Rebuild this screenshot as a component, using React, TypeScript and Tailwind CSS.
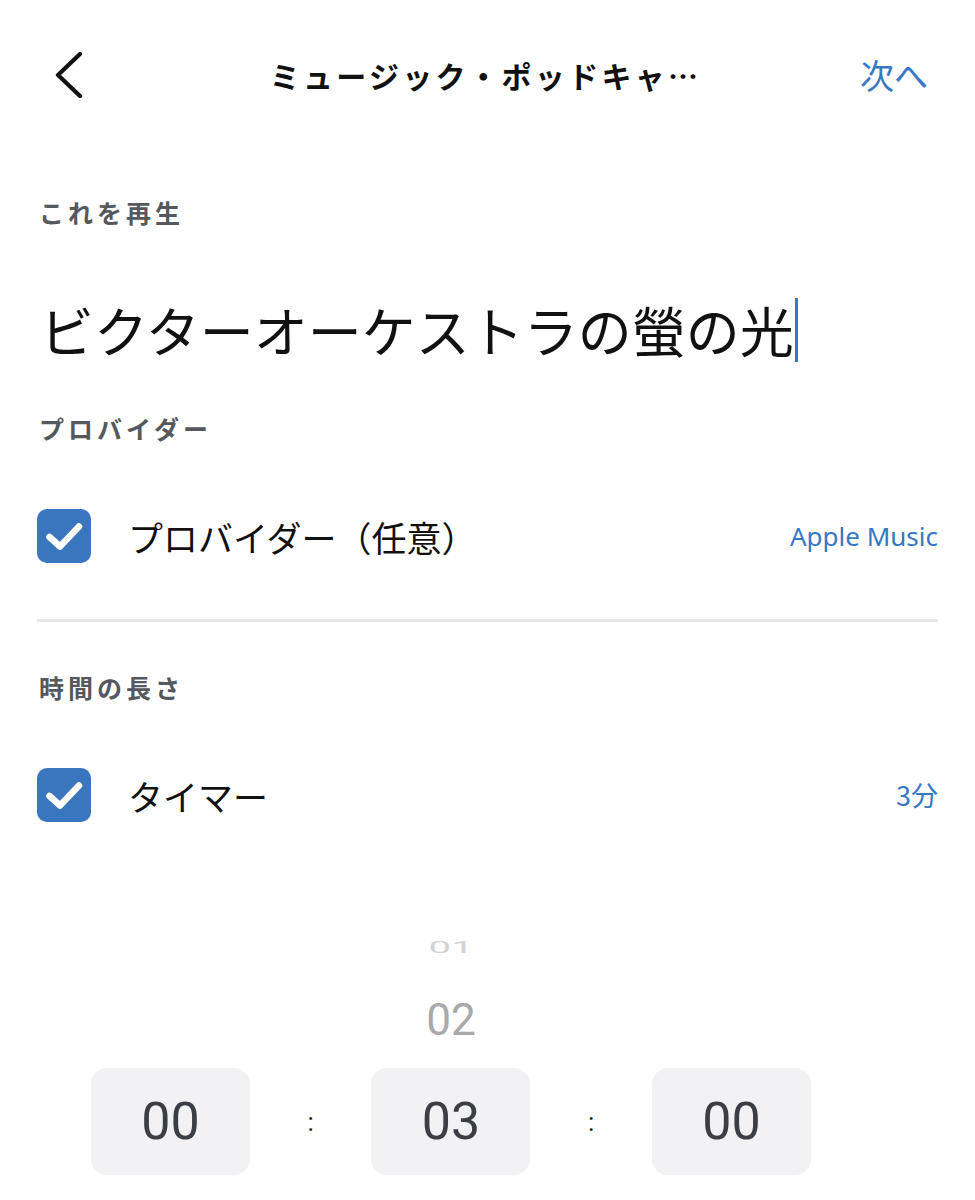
import { useState } from "react"

const jp = "font-['Noto_Sans_CJK_JP','Noto_Sans',sans-serif]"
const num = "font-['Roboto','Noto_Sans',sans-serif]"

function Checkbox() {
  return (
    <div className="flex h-[54px] w-[54px] shrink-0 items-center justify-center rounded-[10px] bg-[#3a76bd]">
      <svg width="54" height="54" viewBox="0 0 54 54" fill="none">
        <path d="M12.5 28 L23 37.5 L42 17.5" stroke="white" strokeWidth="6.5" strokeLinecap="round" strokeLinejoin="round" />
      </svg>
    </div>
  )
}

function SectionLabel({ children, className }: { children: string; className: string }) {
  return (
    <p className={`${className} pl-[2px] text-[25px] font-bold leading-[30px] tracking-[0.16em] text-[#55585c]`}>{children}</p>
  )
}

function CheckRow({ label, value, valueClass }: { label: string; value: string; valueClass: string }) {
  return (
    <div className="mt-[66px] flex h-[54px] items-center">
      <Checkbox />
      <span className="ml-[37px] flex-1 text-[35px] leading-none text-[#111]">{label}</span>
      <span className={`${valueClass} text-[#3778c2]`}>{value}</span>
    </div>
  )
}

export default function App() {
  const [values] = useState(["00", "03", "00"])

  return (
    <div className={`${jp} min-h-[1200px] w-[975px] bg-white`}>
      <header className="relative flex h-[150px] items-center px-[37px]">
        <button className="flex h-[60px] w-[60px] items-center pl-[16px]">
          <svg width="32" height="46" viewBox="0 0 32 46" fill="none">
            <path d="M27 2 L5 23 L27 44" stroke="#111" strokeWidth="4.2" strokeLinecap="round" strokeLinejoin="round" />
          </svg>
        </button>
        <h1 className="flex-1 pl-[14px] text-center text-[30px] font-bold tracking-[0.11em] text-[#111]">ミュージック・ポッドキャ…</h1>
        <span className="pr-[10px] text-[34px] leading-none text-[#3778c2]">次へ</span>
      </header>

      <main className="px-[37px]">
        <SectionLabel className="mt-[47px]">これを再生</SectionLabel>

        <div className="mt-[71px] flex h-[64px] items-center pl-[3px]">
          <span className="text-[54px] leading-[64px] text-[#111]">ビクターオーケストラの螢の光</span>
          <span className="ml-[1px] h-[64px] w-[3px] bg-[#3778c2]" />
        </div>

        <SectionLabel className="mt-[51px]">プロバイダー</SectionLabel>
        <CheckRow label="プロバイダー（任意）" value="Apple Music" valueClass="font-['Noto_Sans',sans-serif] text-[26px]" />

        <div className="mt-[56px] h-[3px] bg-[#e9e9ea]" />

        <SectionLabel className="mt-[50px]">時間の長さ</SectionLabel>
        <CheckRow label="タイマー" value="3分" valueClass="text-[27px]" />

        <div className={`${num} ml-[54px] w-[720px]`}>
          <div className="mt-[106px] flex h-[40px] items-center justify-center">
            <span className="scale-y-[0.4] text-[40px] leading-none text-[#d2d2d4]">01</span>
          </div>
          <div className="mt-[27px] flex h-[50px] items-center justify-center">
            <span className="text-[44px] leading-none text-[#a9a9ab]">02</span>
          </div>
          <div className="mt-[23px] flex items-center justify-between">
            {values.map((v, i) => (
              <div key={i} className="contents">
                {i > 0 && <span className="text-[26px] leading-none text-[#222]">:</span>}
                <div className="flex h-[107px] w-[159px] items-center justify-center rounded-[16px] bg-[#f2f2f4]">
                  <span className="text-[52px] leading-none text-[#3b3e44]">{v}</span>
                </div>
              </div>
            ))}
          </div>
        </div>
      </main>
    </div>
  )
}
